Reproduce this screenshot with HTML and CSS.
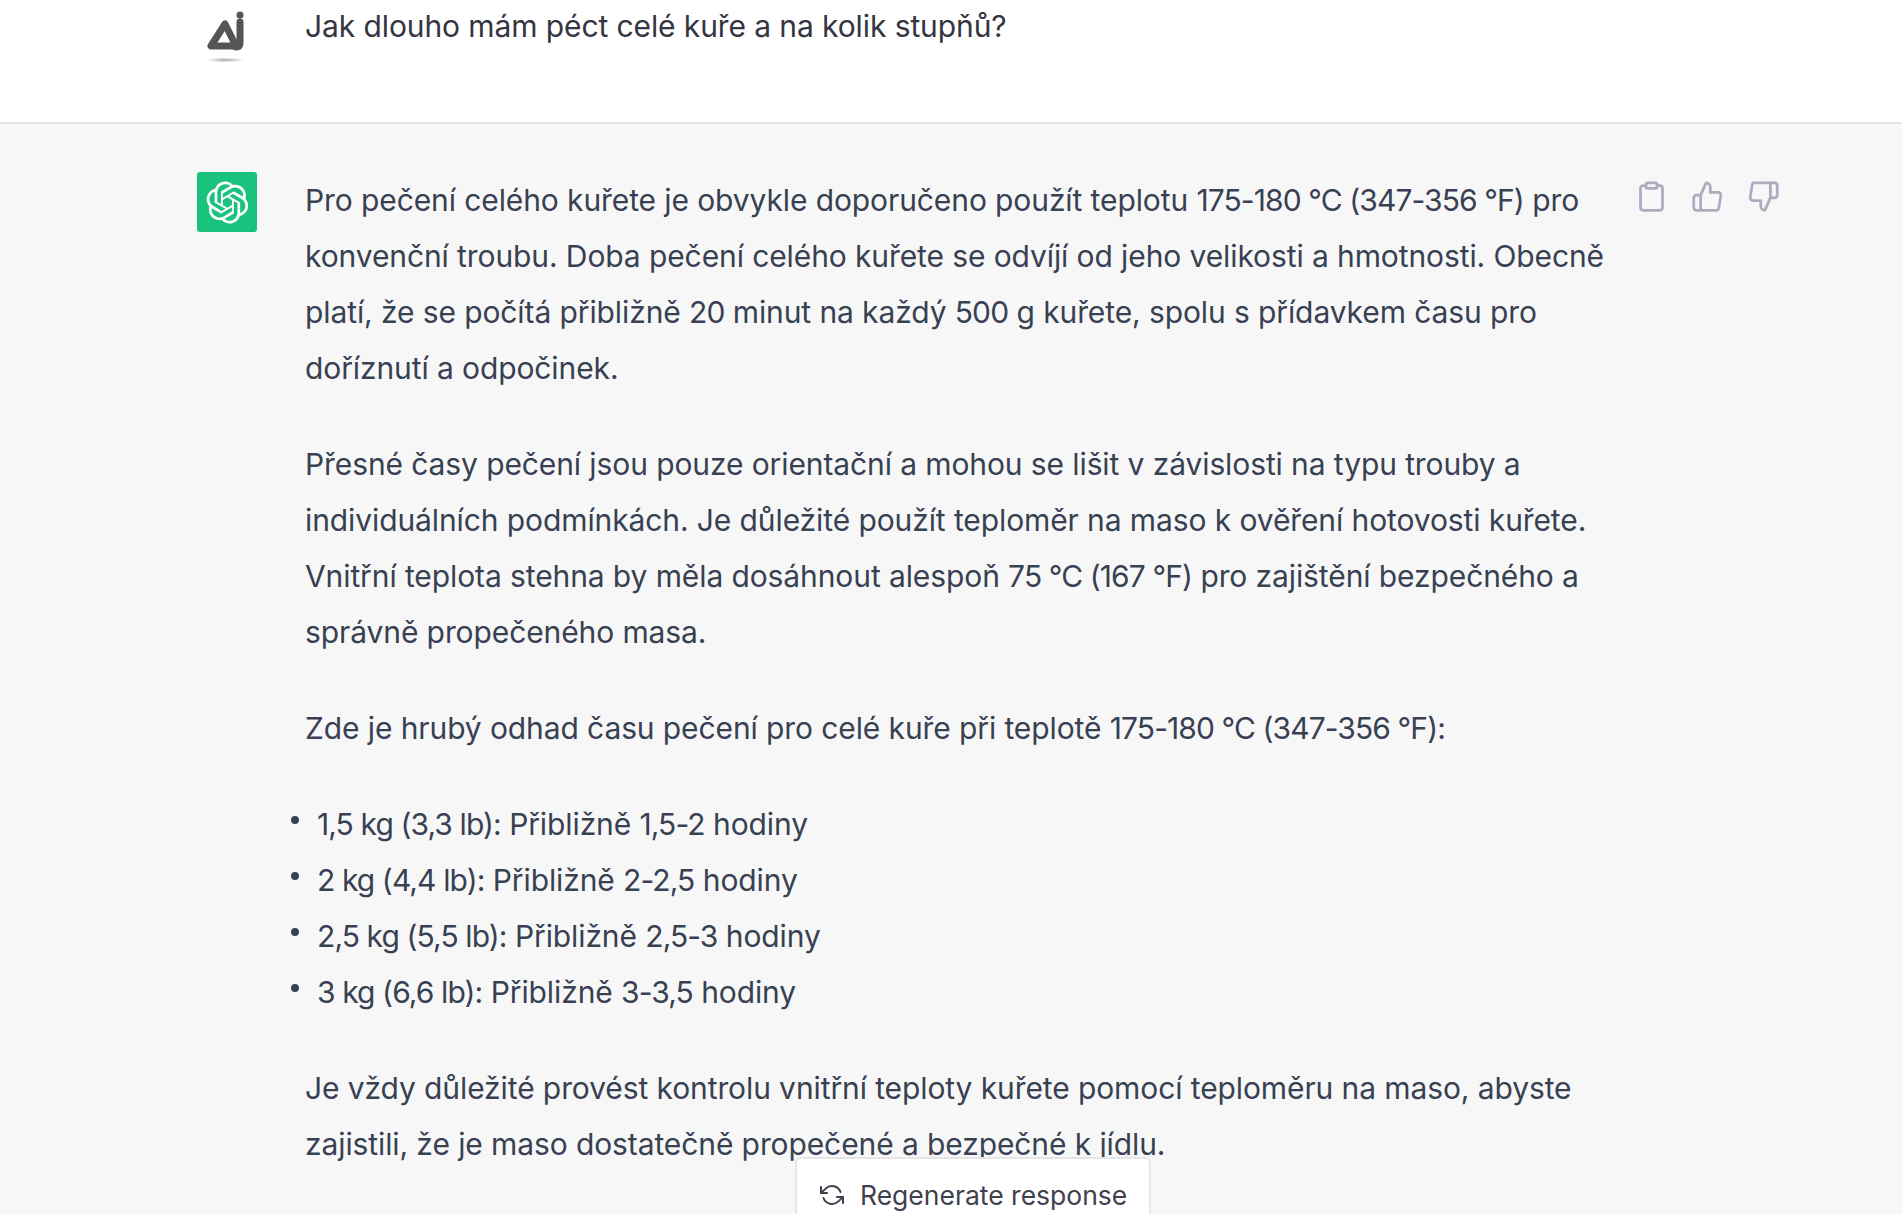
FILE: index.html

```html
<!DOCTYPE html>
<html lang="cs">
<head>
    <meta charset="UTF-8">
    <title>ChatGPT</title>
    <link rel="stylesheet" href="styles.css">
</head>
<body>
    <main class="chat">
        <section class="row row-user">
            <div class="avatar avatar-user">
                <svg viewBox="0 0 60 66" width="60" height="66">
                    <defs>
                        <radialGradient id="logoShadow">
                            <stop offset="0" stop-color="#aaa"/>
                            <stop offset="1" stop-color="#fff"/>
                        </radialGradient>
                    </defs>
                    <path class="logo-line" d="M28 24 L14 46 H39 Z"/>
                    <path class="logo-line" d="M43 22 V43 Q43 47 39 47"/>
                    <circle class="logo-dot" cx="43" cy="15" r="3.5"/>
                    <ellipse cx="28" cy="60" rx="19" ry="2.5" fill="url(#logoShadow)"/>
                </svg>
            </div>
            <div class="msg msg-user">
                <p>Jak dlouho mám péct celé kuře a na kolik stupňů?</p>
            </div>
        </section>
        <section class="row row-bot">
            <div class="avatar avatar-bot">
                <svg viewBox="0 0 41 41" width="43" height="43" fill="none">
                    <path fill="currentColor" d="M37.5324 16.8707C37.9808 15.5241 38.1363 14.0974 37.9886 12.6859C37.8409 11.2744 37.3934 9.91076 36.676 8.68622C35.6126 6.83404 33.9882 5.3676 32.0373 4.4985C30.0864 3.62941 27.9098 3.40259 25.8215 3.85078C24.8796 2.7893 23.7219 1.94125 22.4257 1.36341C21.1295 0.785575 19.7249 0.491269 18.3058 0.500197C16.1708 0.495044 14.0893 1.16803 12.3614 2.42214C10.6335 3.67624 9.34853 5.44666 8.6917 7.47815C7.30085 7.76286 5.98686 8.3414 4.8377 9.17505C3.68854 10.0087 2.73073 11.0782 2.02839 12.312C0.956464 14.1591 0.498905 16.2988 0.721698 18.4228C0.944492 20.5467 1.83612 22.5449 3.268 24.1293C2.81966 25.4759 2.66413 26.9026 2.81182 28.3141C2.95951 29.7256 3.40701 31.0892 4.12437 32.3138C5.18791 34.1659 6.8123 35.6322 8.76321 36.5013C10.7141 37.3704 12.8907 37.5973 14.9789 37.1492C15.9208 38.2107 17.0786 39.0587 18.3747 39.6366C19.6709 40.2144 21.0755 40.5087 22.4946 40.4998C24.6307 40.5054 26.7133 39.8321 28.4418 38.5772C30.1704 37.3223 31.4556 35.5506 32.1119 33.5179C33.5027 33.2332 34.8167 32.6547 35.9659 31.821C37.115 30.9874 38.0728 29.9178 38.7752 28.684C39.8458 26.8371 40.3023 24.6979 40.0789 22.5748C39.8556 20.4517 38.9639 18.4544 37.5324 16.8707ZM22.4978 37.8849C20.7443 37.8874 19.0459 37.2733 17.6994 36.1501C17.7601 36.117 17.8666 36.0586 17.936 36.0161L25.9004 31.4156C26.1003 31.3019 26.2663 31.137 26.3813 30.9378C26.4964 30.7386 26.5563 30.5124 26.5549 30.2825V19.0542L29.9213 20.998C29.9389 21.0068 29.9541 21.0198 29.9656 21.0359C29.977 21.052 29.9842 21.0707 29.9867 21.0902V30.3889C29.9842 32.375 29.1946 34.2791 27.7909 35.6841C26.3872 37.0892 24.4838 37.8806 22.4978 37.8849ZM6.39227 31.0064C5.51397 29.4888 5.19742 27.7107 5.49804 25.9832C5.55718 26.0187 5.66048 26.0818 5.73461 26.1244L13.699 30.7248C13.8975 30.8408 14.1233 30.902 14.3532 30.902C14.583 30.902 14.8088 30.8408 15.0073 30.7248L24.731 25.1103V28.9979C24.7321 29.0177 24.7283 29.0376 24.7199 29.0556C24.7115 29.0736 24.6988 29.0893 24.6829 29.1012L16.6317 33.7497C14.9096 34.7416 12.8643 35.0097 10.9447 34.4954C9.02506 33.9811 7.38785 32.7263 6.39227 31.0064ZM4.29707 13.6194C5.17156 12.0998 6.55279 10.9364 8.19885 10.3327C8.19885 10.4013 8.19491 10.5228 8.19491 10.6071V19.808C8.19351 20.0378 8.25334 20.2638 8.36823 20.4629C8.48312 20.6619 8.64893 20.8267 8.84863 20.9404L18.5723 26.5542L15.206 28.4979C15.1894 28.5089 15.1703 28.5155 15.1505 28.5173C15.1307 28.5191 15.1107 28.516 15.0924 28.5082L7.04046 23.8557C5.32135 22.8601 4.06716 21.2235 3.55289 19.3046C3.03862 17.3858 3.30624 15.3413 4.29707 13.6194ZM31.955 20.0556L22.2312 14.4411L25.5976 12.4981C25.6142 12.4872 25.6333 12.4805 25.6531 12.4787C25.6729 12.4769 25.6928 12.4801 25.7111 12.4879L33.7631 17.1364C34.9967 17.849 36.0017 18.8982 36.6606 20.1613C37.3194 21.4244 37.6047 22.849 37.4832 24.2684C37.3617 25.6878 36.8382 27.0432 35.9743 28.1759C35.1103 29.3086 33.9415 30.1717 32.6047 30.6641C32.6047 30.5947 32.6047 30.4733 32.6047 30.3889V21.188C32.6066 20.9586 32.5474 20.7328 32.4332 20.5338C32.319 20.3348 32.154 20.1698 31.955 20.0556ZM35.3055 15.0128C35.2464 14.9765 35.1431 14.9142 35.069 14.8717L27.1045 10.2712C26.906 10.1554 26.6803 10.0943 26.4504 10.0943C26.2206 10.0943 25.9948 10.1554 25.7963 10.2712L16.0726 15.8858V11.9982C16.0715 11.9783 16.0753 11.9585 16.0837 11.9405C16.0921 11.9225 16.1048 11.9068 16.1207 11.8949L24.1719 7.25025C25.4053 6.53903 26.8158 6.19376 28.2383 6.25482C29.6608 6.31589 31.0364 6.78077 32.2044 7.59508C33.3723 8.40939 34.2842 9.53945 34.8334 10.8531C35.3826 12.1667 35.5464 13.6095 35.3055 15.0128ZM14.2424 21.9419L10.8752 19.9981C10.8576 19.9893 10.8423 19.9763 10.8309 19.9602C10.8195 19.9441 10.8122 19.9254 10.8098 19.9058V10.6071C10.8107 9.18295 11.2173 7.78848 11.9819 6.58696C12.7466 5.38544 13.8377 4.42659 15.1275 3.82264C16.4173 3.21869 17.8524 2.99464 19.2649 3.1767C20.6775 3.35876 22.0089 3.93941 23.1034 4.85067C23.0427 4.88379 22.937 4.94215 22.8668 4.98473L14.9024 9.58517C14.7025 9.69878 14.5366 9.86356 14.4215 10.0626C14.3065 10.2616 14.2466 10.4877 14.2479 10.7175L14.2424 21.9419ZM16.071 17.9991L20.4018 15.4978L24.7325 17.9975V22.9985L20.4018 25.4983L16.071 22.9985V17.9991Z"/>
                </svg>
            </div>
            <div class="msg msg-bot">
                <p>Pro pečení celého kuřete je obvykle doporučeno použít teplotu <span class="num">175-180 °C (347-356 °F)</span> pro konvenční troubu. Doba pečení celého kuřete se odvíjí od jeho velikosti a hmotnosti. Obecně platí, že se počítá přibližně <span class="num">20</span> minut na každý <span class="num">500</span> g kuřete, spolu s přídavkem času pro doříznutí a odpočinek.</p>
                <p>Přesné časy pečení jsou pouze orientační a mohou se lišit v závislosti na typu trouby a individuálních podmínkách. Je důležité použít teploměr na maso k ověření hotovosti kuřete. Vnitřní teplota stehna by měla dosáhnout alespoň <span class="num">75 °C (167 °F)</span> pro zajištění bezpečného a správně propečeného masa.</p>
                <p>Zde je hrubý odhad času pečení pro celé kuře při teplotě <span class="num">175-180 °C (347-356 °F):</span></p>
                <ul>
                    <li><span class="num">1,5 kg (3,3 lb):</span> Přibližně <span class="num">1,5-2</span> hodiny</li>
                    <li><span class="num">2 kg (4,4 lb):</span> Přibližně <span class="num">2-2,5</span> hodiny</li>
                    <li><span class="num">2,5 kg (5,5 lb):</span> Přibližně <span class="num">2,5-3</span> hodiny</li>
                    <li><span class="num">3 kg (6,6 lb):</span> Přibližně <span class="num">3-3,5</span> hodiny</li>
                </ul>
                <p>Je vždy důležité provést kontrolu vnitřní teploty kuřete pomocí teploměru na maso, abyste zajistili, že je maso dostatečně propečené a bezpečné k jídlu.</p>
            </div>
            <div class="actions">
                <svg viewBox="0 0 24 24" width="33" height="33"><path d="M16 4h2a2 2 0 0 1 2 2v14a2 2 0 0 1-2 2H6a2 2 0 0 1-2-2V6a2 2 0 0 1 2-2h2"/><rect x="8" y="2" width="8" height="4" rx="1" ry="1"/></svg>
                <svg viewBox="0 0 24 24" width="33" height="33"><path d="M14 9V5a3 3 0 0 0-3-3l-4 9v11h11.28a2 2 0 0 0 2-1.7l1.38-9a2 2 0 0 0-2-2.3zM7 22H4a2 2 0 0 1-2-2v-7a2 2 0 0 1 2-2h3"/></svg>
                <svg viewBox="0 0 24 24" width="33" height="33"><path d="M10 15v4a3 3 0 0 0 3 3l4-9V2H5.72a2 2 0 0 0-2 1.7l-1.38 9a2 2 0 0 0 2 2.3zm7-13h2.67A2.31 2.31 0 0 1 22 4v7a2.31 2.31 0 0 1-2.33 2H17"/></svg>
            </div>
        </section>
    </main>
    <button class="regen">
        <svg viewBox="0 0 24 24" width="24" height="24"><polyline points="1 4 1 10 7 10"/><polyline points="23 20 23 14 17 14"/><path d="M20.49 9A9 9 0 0 0 5.64 5.64L1 10m22 4l-4.64 4.36A9 9 0 0 1 3.51 15"/></svg>
        <span>Regenerate response</span>
    </button>
</body>
</html>
```

FILE: styles.css

```css
* {
    box-sizing: border-box;
}
html, body {
    height: 100%;
}
body {
    margin: 0;
    overflow: hidden;
    background-color: #f7f7f8;
    font-family: Inter, "Noto Sans", sans-serif;
    font-size: 30px;
    line-height: 56px;
    letter-spacing: -0.1px;
    color: #374151;
}
.row {
    display: flex;
    padding-left: 197px;
}
.row-user {
    height: 124px;
    background: #fff;
    border-bottom: 2px solid #e5e5e5;
    color: #343541;
}
.row-bot {
    padding-top: 48px;
}
.avatar {
    flex: none;
    width: 60px;
    height: 60px;
    margin-right: 48px;
    border-radius: 3px;
}
.logo-line {
    fill: none;
    stroke: #555;
    stroke-width: 7;
    stroke-linejoin: round;
    stroke-linecap: round;
}
.logo-dot {
    fill: #555;
}
.avatar-bot {
    display: flex;
    align-items: center;
    justify-content: center;
    background: #19c37d;
    color: #fff;
}
.msg {
    flex: none;
    width: 1320px;
}
.msg p {
    margin: 0 0 40px;
}
.msg-user p {
    margin: -2px 0 0;
}
.num {
    letter-spacing: -0.9px;
}
.msg ul {
    margin: 0 0 40px;
    padding: 0 0 0 12px;
    list-style: none;
}
.msg li {
    position: relative;
}
.msg li::before {
    content: "";
    position: absolute;
    left: -26px;
    top: 20px;
    width: 8px;
    height: 8px;
    border-radius: 50%;
    background: #374151;
}
.actions {
    display: flex;
    gap: 23px;
    height: 33px;
    margin: 8px 0 0 10px;
}
.actions svg, .regen svg {
    fill: none;
    stroke-width: 2;
    stroke-linecap: round;
    stroke-linejoin: round;
}
.actions svg {
    stroke: #acacbe;
}
.regen {
    position: absolute;
    left: 795px;
    top: 1157px;
    display: flex;
    align-items: center;
    gap: 16px;
    width: 356px;
    height: 76px;
    padding: 0 23px;
    background: #fff;
    border: 2px solid #e5e5e5;
    border-radius: 6px;
    font-family: inherit;
    font-size: 26.5px;
    letter-spacing: 0;
    white-space: nowrap;
    color: #40414f;
}
.regen svg {
    flex: none;
    stroke: #40414f;
}
```
